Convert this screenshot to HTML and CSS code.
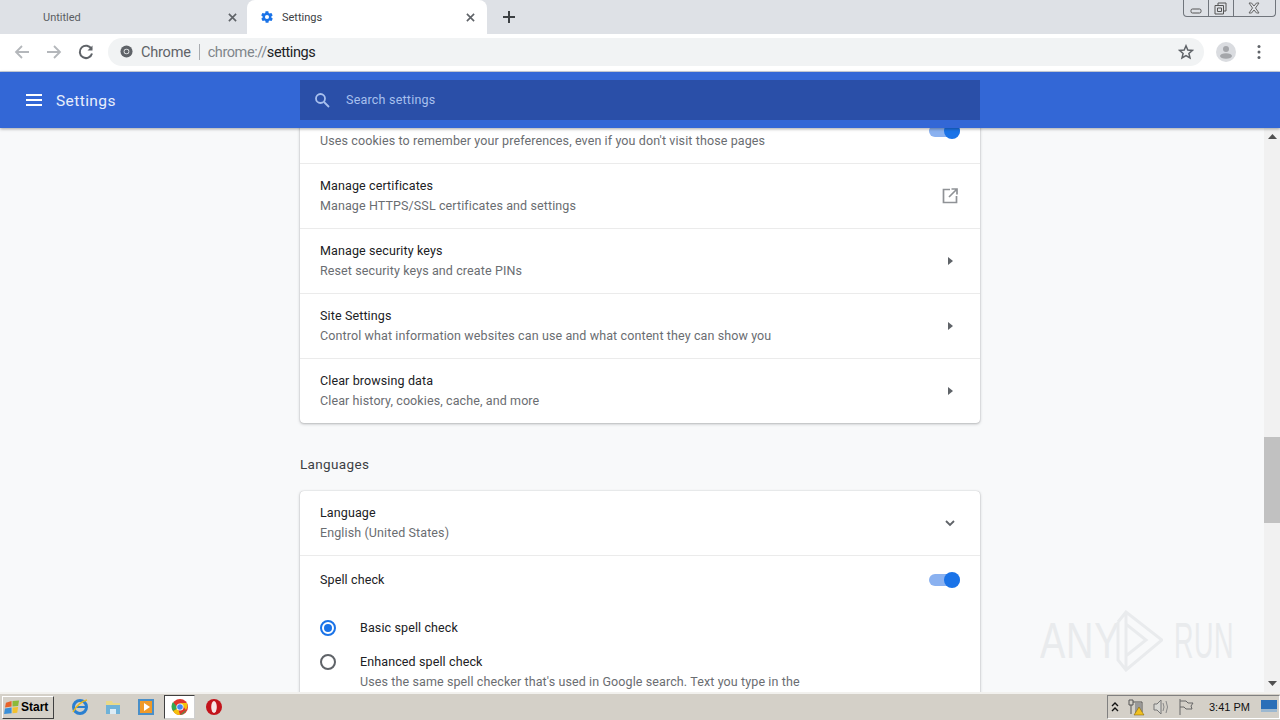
FILE: index.html
```html
<!DOCTYPE html>
<html lang="en">
<head>
<meta charset="utf-8">
<title>Settings</title>
<link rel="stylesheet" href="styles.css">
</head>
<body>
<div class="tabstrip">
  <div class="tab inactive"><span class="tab-title">Untitled</span>
    <svg class="tab-x" viewBox="0 0 10 10"><path d="M1 1l8 8M9 1l-8 8"/></svg></div>
  <div class="tab active">
    <svg class="gear" viewBox="0 0 24 24"><path d="M19.4 13c.1-.3.1-.7.1-1s0-.7-.1-1l2.100-1.600c.2-.2.2-.4.1-.6l-2-3.500c-.1-.2-.4-.3-.6-.2l-2.500 1c-.5-.4-1.100-.7-1.700-1l-.4-2.600c0-.3-.2-.5-.5-.5h-4c-.3 0-.5.2-.5.400l-.4 2.700c-.6.2-1.200.6-1.700 1l-2.500-1c-.2-.1-.5 0-.6.200l-2 3.500c-.1.200-.1.500.1.600L4.600 11c-.1.300-.1.700-.1 1s0 .7.1 1l-2.100 1.600c-.2.200-.2.400-.1.600l2 3.500c.1.200.4.300.6.200l2.500-1c.5.400 1.100.700 1.700 1l.4 2.600c0 .3.2.5.5.5h4c.3 0 .5-.2.5-.4l.4-2.700c.6-.2 1.200-.6 1.700-1l2.500 1c.2.100.5 0 .6-.2l2-3.500c.1-.2.1-.5-.1-.6zM12 15.500a3.500 3.500 0 1 1 0-7 3.500 3.500 0 0 1 0 7z"/></svg>
    <span class="tab-title dark">Settings</span>
    <svg class="tab-x" viewBox="0 0 10 10"><path d="M1 1l8 8M9 1l-8 8"/></svg></div>
  <svg class="newtab" viewBox="0 0 12 12"><path d="M6 0v12M0 6h12"/></svg>
  <div class="winctl">
    <span class="wbtn min"><svg viewBox="0 0 12 6"><rect x="1" y="1" width="10" height="4" rx="1.500"/></svg></span>
    <span class="wbtn mid"><svg viewBox="0 0 13 13"><path d="M4 3V1h8v8h-2M1 3.500h8.500V12H1zM3.500 6h4v3.500h-4z"/></svg></span>
    <span class="wbtn cls"><svg viewBox="0 0 14 12"><path d="M2 1h2.500L7 4l2.500-3H12L8.500 6l3.500 5H9.500L7 8l-2.500 3H2l3.500-5z"/></svg></span>
  </div>
</div>

<div class="toolbar">
  <svg class="navicon light" viewBox="0 0 16 16"><path d="M15 8H2M8 2L2 8l6 6"/></svg>
  <svg class="navicon light" viewBox="0 0 16 16"><path d="M1 8h13M8 2l6 6-6 6"/></svg>
  <svg class="navicon reload" viewBox="0 0 16 16"><path d="M13.500 5A6.200 6.200 0 1 0 14 9.500"/><path class="fill" d="M14.500 1.500v5h-5z"/></svg>
  <div class="omnibox">
    <svg class="chrome-mono" viewBox="0 0 14 14"><circle cx="7" cy="7" r="6.500"/><circle class="hole" cx="7" cy="7" r="3"/><circle cx="7" cy="7" r="2.200"/></svg>
    <span class="omni-chrome">Chrome</span>
    <span class="omni-sep"></span>
    <span class="omni-url">chrome://<span class="omni-path">settings</span></span>
    <svg class="star" viewBox="0 0 16 16"><path d="M8 1.800l1.800 4.200 4.600.4-3.500 3 1.100 4.500L8 11.500l-4 2.400 1.100-4.500-3.500-3 4.600-.4z"/></svg>
  </div>
  <svg class="avatar" viewBox="0 0 20 20"><circle class="bg" cx="10" cy="10" r="10"/><circle class="fg" cx="10" cy="7" r="3"/><ellipse class="fg" cx="10" cy="14" rx="6" ry="2.800"/></svg>
  <svg class="dots" viewBox="0 0 4 16"><circle cx="2" cy="2.500" r="1.500"/><circle cx="2" cy="8" r="1.500"/><circle cx="2" cy="13.500" r="1.500"/></svg>
</div>

<header class="appbar">
  <div class="appbar-left">
    <svg class="menu" viewBox="0 0 16 12"><path d="M0 1h16M0 6h16M0 11h16"/></svg>
    <span class="appbar-title">Settings</span>
  </div>
  <div class="searchbox">
    <svg class="search-ic" viewBox="0 0 16 16"><circle cx="6.500" cy="6.500" r="4.500"/><path d="M10 10l5 5"/></svg>
    <span class="search-text">Search settings</span>
  </div>
</header>

<div class="viewport">
  <main class="content">
    <div class="scroller">
      <section class="card first">
        <div class="row two clipped">
          <div class="text"><div class="sub">Uses cookies to remember your preferences, even if you don't visit those pages</div></div>
          <span class="toggle"><span class="knob"></span></span>
        </div>
        <div class="row two">
          <div class="text"><div class="label">Manage certificates</div><div class="sub">Manage HTTPS/SSL certificates and settings</div></div>
          <svg class="ext" viewBox="0 0 16 16"><path d="M8 1.500H1.500v13h13V8M9.500 1H15v5.500M15 1L7 9"/></svg>
        </div>
        <div class="row two">
          <div class="text"><div class="label">Manage security keys</div><div class="sub">Reset security keys and create PINs</div></div>
          <svg class="arrow" viewBox="0 0 5 8"><path d="M0 0l5 4-5 4z"/></svg>
        </div>
        <div class="row two">
          <div class="text"><div class="label">Site Settings</div><div class="sub">Control what information websites can use and what content they can show you</div></div>
          <svg class="arrow" viewBox="0 0 5 8"><path d="M0 0l5 4-5 4z"/></svg>
        </div>
        <div class="row two">
          <div class="text"><div class="label">Clear browsing data</div><div class="sub">Clear history, cookies, cache, and more</div></div>
          <svg class="arrow" viewBox="0 0 5 8"><path d="M0 0l5 4-5 4z"/></svg>
        </div>
      </section>
      <h2 class="section-title">Languages</h2>
      <section class="card">
        <div class="row lang">
          <div class="text"><div class="label">Language</div><div class="sub">English (United States)</div></div>
          <svg class="chev" viewBox="0 0 10 7"><path d="M1 1l4 4 4-4"/></svg>
        </div>
        <div class="row spell">
          <div class="label">Spell check</div>
          <span class="toggle"><span class="knob"></span></span>
        </div>
        <div class="radio-row basic"><span class="radio on"></span><div class="label">Basic spell check</div></div>
        <div class="radio-row enhanced"><span class="radio"></span><div class="text"><div class="label">Enhanced spell check</div><div class="sub">Uses the same spell checker that's used in Google search. Text you type in the</div></div></div>
      </section>
    </div>
    <div class="watermark">
      <span class="wm-text any">ANY</span>
      <svg class="wm-logo" viewBox="0 0 53 62"><path d="M8 12v38l8 10 36-30L16 2 8 12M16 14v32l20-16zM16 2v12M16 46v14"/></svg>
      <span class="wm-text run">RUN</span>
    </div>
  </main>
  <aside class="scrollbar">
    <span class="sb-btn"><svg viewBox="0 0 9 5"><path d="M4.500 0L9 5H0z"/></svg></span>
    <div class="sb-track"><div class="sb-thumb"></div></div>
    <span class="sb-btn down"><svg viewBox="0 0 9 5"><path d="M0 0h9L4.500 5z"/></svg></span>
  </aside>
</div>

<footer class="taskbar">
  <button class="start">
    <svg class="flag" viewBox="0 0 18 16"><path fill="#e8632a" d="M2 3l6-2v6l-7 1z"/><path fill="#8cb93a" d="M9 1l7-.5-1 6-6 .5z"/><path fill="#3a8fd8" d="M1 9l7-1v6l-8 1z"/><path fill="#f3c12e" d="M9 8l6-.5-1 6-5 .5z"/></svg>
    <span>Start</span>
  </button>
  <div class="quick">
    <svg class="tb-ic" viewBox="0 0 18 18"><circle cx="9" cy="9" r="6.500" fill="none" stroke="#2a7fd0" stroke-width="3"/><path d="M5 9h9" stroke="#2a7fd0" stroke-width="2"/><path d="M2 14C5 8 11 3 16 2" fill="none" stroke="#e8b820" stroke-width="1.500"/></svg>
    <svg class="tb-ic" viewBox="0 0 18 18"><path fill="#e9d98b" d="M2 3h6l1 2h7v4H2z"/><path fill="#6fb2d8" d="M2 7h14v9H2z"/><path fill="#dcecf5" d="M6 11h6v5H6z"/></svg>
    <svg class="tb-ic" viewBox="0 0 18 18"><rect x="1" y="1" width="16" height="16" fill="#4a8fc8"/><rect x="3" y="3" width="12" height="12" fill="#f09a28"/><path fill="#fff" d="M7 5l6 4-6 4z"/></svg>
    <span class="tb-active"><svg class="tb-ic" viewBox="0 0 18 18"><circle cx="9" cy="9" r="8" fill="#e0352b"/><path fill="#f4c20d" d="M2 13l5-3 2 7a8 8 0 0 1-7-4z"/><path fill="#34a853" d="M2 13a8 8 0 0 1 0-9l5 6zM9 17l6-5a8 8 0 0 1-6 5z"/><path fill="#f4c20d" d="M9 5h7a8 8 0 0 1-1 7l-3-4z"/><circle cx="9" cy="9" r="3.600" fill="#fff"/><circle cx="9" cy="9" r="2.800" fill="#4285f4"/></svg></span>
    <svg class="tb-ic" viewBox="0 0 18 18"><circle cx="9" cy="9" r="8" fill="#c3131b"/><ellipse cx="9" cy="9" rx="2.800" ry="6" fill="#f7e6e6"/></svg>
  </div>
  <div class="tray">
    <svg class="tray-up" viewBox="0 0 8 10"><path d="M1 4l3-3 3 3M1 9l3-3 3 3"/></svg>
    <svg class="tray-ic" viewBox="0 0 18 18"><path fill="none" stroke="#555" d="M2 2h4v5H2zM4 7v9M6 4h9v10H8"/><path fill="#999" d="M8 5h6v8H8z"/><path fill="#f0c020" stroke="#7a5a00" stroke-width=".5" d="M12 9l5 8H7z"/></svg>
    <svg class="tray-ic" viewBox="0 0 18 18"><path fill="#d8d8d4" stroke="#777" d="M2 6h3l4-4v14l-4-4H2z"/><path fill="none" stroke="#888" d="M11 5q2 4 0 8M14 3q3 6 0 12"/></svg>
    <svg class="tray-ic" viewBox="0 0 18 18"><path fill="none" stroke="#666" d="M3 1v16M3 3h6l2 2h5l-2 3 1 3H9L7 9H3"/></svg>
    <span class="clock">3:41 PM</span>
    <svg class="desk" viewBox="0 0 16 14"><rect width="16" height="11" fill="#2a6fb8"/><rect y="9" width="16" height="3" fill="#9cb8d0"/></svg>
  </div>
</footer>
</body>
</html>
```
FILE: styles.css
```css
* { box-sizing: border-box; }
html, body { height: 100%; }
body {
  margin: 0;
  width: 1280px;
  height: 720px;
  overflow: hidden;
  display: flex;
  flex-direction: column;
  font-family: Roboto, "Liberation Sans", sans-serif;
  background: #fff;
}
svg { display: block; flex: none; }

/* tabs */
.tabstrip {
  height: 34px;
  flex: none;
  background: #dee1e6;
  display: flex;
  align-items: stretch;
  position: relative;
}
.tab { display: flex; align-items: center; color: #5a5d62; }
.tab.inactive { padding: 0 10px 0 43px; width: 247px; }
.tab.active {
  background: #fff;
  width: 240px;
  padding: 0 12px 0 13px;
  border-radius: 8px 8px 0 0;
}
.tab-title { flex: 1; font-size: 11px; }
.tab-title.dark { color: #3c4043; margin-left: 8px; }
.gear { width: 14px; height: 14px; fill: #1a73e8; }
.tab-x { width: 9px; height: 9px; fill: none; stroke: #5f6368; stroke-width: 1.800; }
.newtab { width: 12px; height: 12px; margin: 11px 0 0 16px; fill: none; stroke: #3c4043; stroke-width: 2; }
.winctl {
  position: absolute;
  right: 4px;
  top: 0;
  width: 93px;
  height: 17px;
  display: flex;
  border: 1px solid #70757c;
  border-top: 0;
  border-radius: 0 0 4px 4px;
}
.wbtn { display: flex; align-items: center; justify-content: center; border-right: 1px solid #70757c; }
.wbtn.min { width: 25px; padding-top: 5px; }
.wbtn.mid { width: 25px; padding-right: 2px; }
.wbtn.cls { flex: 1; border-right: 0; padding-right: 2px; }
.wbtn.min svg { width: 12px; height: 6px; fill: none; stroke: #555; }
.wbtn.mid svg { width: 13px; height: 13px; fill: none; stroke: #555; }
.wbtn.cls svg { width: 14px; height: 12px; fill: none; stroke: #666; }

/* toolbar */
.toolbar {
  height: 38px;
  flex: none;
  background: #fff;
  border-bottom: 1px solid #ced3de;
  display: flex;
  align-items: center;
  padding: 0 14px 2px 14px;
}
.navicon { width: 16px; height: 16px; margin-right: 16px; fill: none; stroke-width: 1.800; }
.navicon.light { stroke: #b4b7bb; }
.navicon.reload { stroke: #5f6368; stroke-width: 2; margin-right: 14px; }
.navicon .fill { fill: #5f6368; stroke: none; }
.omnibox {
  width: 1096px;
  height: 28px;
  background: #f1f3f4;
  border-radius: 14px;
  display: flex;
  align-items: center;
  padding: 0 10px 0 12px;
  font-size: 14.500px;
}
.chrome-mono { width: 13px; height: 13px; fill: #5f6368; }
.chrome-mono .hole { fill: #f1f3f4; }
.omni-chrome { color: #5f6368; margin-left: 8px; letter-spacing: -.2px; padding-top: 1px; }
.omni-sep { width: 1px; height: 16px; background: #a9acb0; margin: 0 8px; }
.omni-url { color: #80868b; flex: 1; letter-spacing: -.42px; padding-top: 1px; }
.omni-path { color: #202124; }
.star { width: 16px; height: 16px; fill: none; stroke: #5f6368; stroke-width: 1.500; }
.avatar { width: 20px; height: 20px; margin-left: 12px; }
.avatar .bg { fill: #dadce0; }
.avatar .fg { fill: #a4a6aa; }
.dots { width: 4px; height: 16px; margin-left: 21px; fill: #5f6368; }

/* app bar */
.appbar {
  height: 56px;
  flex: none;
  background: #3367d6;
  display: flex;
  align-items: center;
  box-shadow: 0 1px 3px rgba(0,0,0,.35);
  position: relative;
  z-index: 2;
}
.appbar-left { width: 300px; display: flex; align-items: center; padding-left: 26px; }
.menu { width: 16px; height: 12px; fill: none; stroke: #fff; stroke-width: 2; }
.appbar-title { color: #e8eefb; font-size: 15.500px; margin-left: 14px; letter-spacing: .4px; padding-top: 1px; }
.searchbox {
  width: 680px;
  height: 40px;
  background: #2a4fa8;
  margin-top: -1px;
  display: flex;
  align-items: center;
  padding-left: 14px;
}
.search-ic { width: 16px; height: 16px; fill: none; stroke: #a8c0ee; stroke-width: 1.800; }
.search-text { color: #a8c0ee; font-size: 12.500px; margin-left: 16px; letter-spacing: .22px; }

/* content */
.viewport { flex: 1; min-height: 0; display: flex; background: #f8f9fa; }
.content { flex: 1; position: relative; overflow: hidden; }
.scroller { width: 680px; margin: -30px 0 0 300px; }
.card {
  background: #fff;
  border-radius: 4px;
  box-shadow: 0 0 1px rgba(60,64,67,.35), 0 1px 3px rgba(60,64,67,.35);
}
.row {
  display: flex;
  align-items: center;
  justify-content: space-between;
  padding: 0 20px;
  border-top: 1px solid #ebebeb;
}
.card .row:first-child { border-top: 0; }
.row > .text { margin-top: -2px; }
.row.clipped > .text { margin-top: 19px; }
.row.two { height: 65px; }
.row.lang { height: 64px; }
.row.spell { height: 48px; }
.text { display: flex; flex-direction: column; gap: 5px; }
.label { font-size: 12.500px; line-height: 15px; color: #202124; letter-spacing: .12px; }
.sub { font-size: 12.500px; line-height: 15px; color: #6a6d71; letter-spacing: .11px; white-space: nowrap; }
.toggle {
  position: relative;
  width: 31px;
  height: 12px;
  border-radius: 6px;
  background: #8ab1f0;
  display: block;
}
.knob {
  position: absolute;
  right: 0;
  top: -2px;
  width: 16px;
  height: 16px;
  border-radius: 50%;
  background: #1a73e8;
}
.ext { width: 16px; height: 16px; margin-right: 2px; fill: none; stroke: #8f9296; stroke-width: 1.700; }
.arrow { width: 5px; height: 8px; margin-right: 7px; fill: #5f6368; }
.chev { width: 10px; height: 7px; margin-right: 5px; fill: none; stroke: #5f6368; stroke-width: 1.800; }
.section-title {
  margin: 0;
  height: 68px;
  padding-top: 33px;
  font-size: 13.500px;
  line-height: 17px;
  font-weight: 400;
  color: #3c4043;
  letter-spacing: .35px;
}
.radio-row { display: flex; align-items: flex-start; gap: 24px; padding: 0 20px; height: 34px; }
.radio-row.basic { margin-top: 17px; }
.radio-row.enhanced { height: 60px; }
.radio {
  width: 16px;
  height: 16px;
  border-radius: 50%;
  border: 2px solid #5f6368;
  flex: none;
  background: #fff;
  position: relative;
}
.radio.on { border-color: #1a73e8; }
.radio.on::after {
  content: "";
  position: absolute;
  inset: 2px;
  border-radius: 50%;
  background: #1a73e8;
}

/* watermark */
.watermark {
  position: absolute;
  left: 1040px;
  top: 482px;
  display: flex;
  align-items: center;
  gap: 8px;
  pointer-events: none;
}
.wm-text {
  font-family: "Liberation Sans", sans-serif;
  font-size: 50px;
  line-height: 50px;
  color: #e9ebed;
  width: 62px;
  transform-origin: left center;
  letter-spacing: 1px;
}
.wm-text.any { transform: scaleX(.76); }
.wm-text.run { transform: scaleX(.54); margin-left: 3px; }
.wm-logo { width: 53px; height: 62px; fill: none; stroke: #e9ebed; stroke-width: 3; }

/* scrollbar */
.scrollbar { width: 16px; flex: none; background: #f1f1f1; display: flex; flex-direction: column; }
.sb-btn { height: 16px; flex: none; display: flex; align-items: center; justify-content: center; }
.sb-btn.down { padding-bottom: 2px; }
.sb-btn svg { width: 9px; height: 5px; fill: #505050; }
.sb-track { flex: 1; padding-top: 293px; }
.sb-thumb { height: 86px; background: #c1c1c1; }

/* taskbar */
.taskbar {
  height: 28px;
  flex: none;
  background: #d4d0c8;
  border-top: 2px solid #f2f1ee;
  display: flex;
  align-items: center;
  position: relative;
  z-index: 2;
}
.start {
  width: 52px;
  height: 23px;
  margin-left: 2px;
  padding: 0 0 0 1px;
  background: #d4d0c8;
  border: 1px solid;
  border-color: #fff #404040 #404040 #fff;
  display: flex;
  align-items: center;
  gap: 0;
  font-family: "Liberation Sans", sans-serif;
  font-weight: 700;
  font-size: 12px;
  color: #000;
}
.flag { width: 17px; height: 15px; }
.quick { display: flex; align-items: center; margin-left: 17px; gap: 15px; }
.tb-ic { width: 18px; height: 18px; }
.tb-active {
  width: 31px;
  height: 24px;
  margin: 0 -5px 0 -6px;
  background: #fff;
  border: 1px solid;
  border-color: #404040 #d0d0d0 #d0d0d0 #404040;
  display: flex;
  align-items: center;
  justify-content: center;
}
.tray {
  margin-left: auto;
  width: 173px;
  height: 24px;
  border: 1px solid;
  border-color: #808080 #fff #fff #808080;
  display: flex;
  align-items: center;
  padding-left: 3px;
}
.tray-up { width: 8px; height: 10px; fill: none; stroke: #111; stroke-width: 1.400; margin-right: 8px; }
.tray-ic { width: 18px; height: 18px; margin-right: 7px; }
.clock { font-family: "Liberation Sans", sans-serif; font-size: 11px; color: #111; margin-left: 7px; white-space: nowrap; }
.desk { width: 16px; height: 14px; margin-left: 11px; }
```
